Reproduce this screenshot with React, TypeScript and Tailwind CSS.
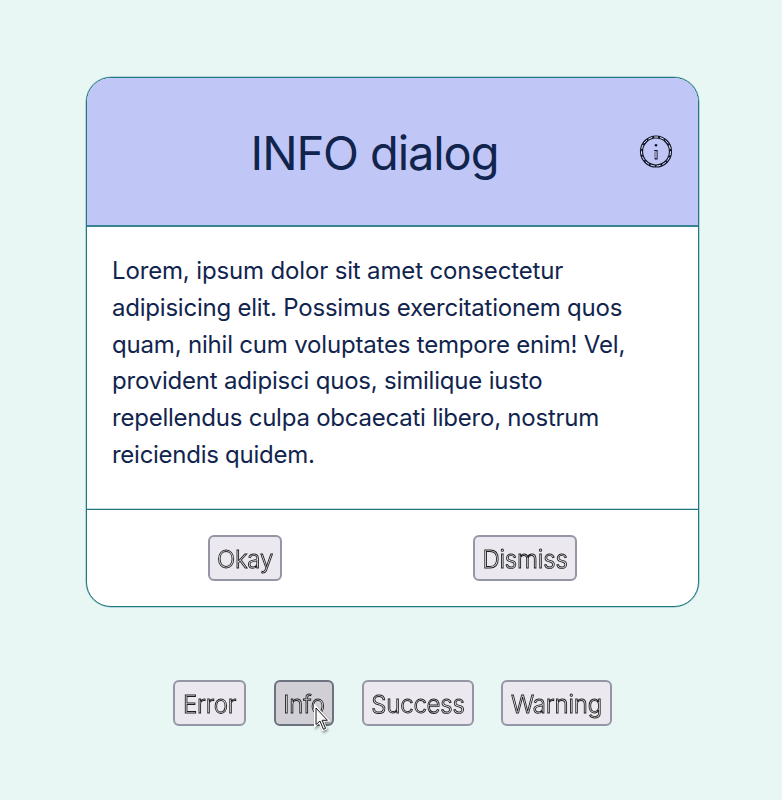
import React from "react";

const lines: [string, string][] = [
  ["Lorem, ipsum dolor sit amet consectetur", "tracking-[-0.15px]"],
  ["adipisicing elit. Possimus exercitationem quos", "tracking-[-0.22px]"],
  ["quam, nihil cum voluptates tempore enim! Vel,", "tracking-[-0.19px]"],
  ["provident adipisci quos, similique iusto", "tracking-[-0.2px]"],
  ["repellendus culpa obcaecati libero, nostrum", "tracking-[-0.23px]"],
  ["reiciendis quidem.", "tracking-[-0.27px]"],
];

function OutlinedButton({ label, size, active = false }: { label: string; size: string; active?: boolean }) {
  const tone = active ? "bg-[#d0cfd6] border-[#6d727f]" : "bg-[#ebe9ef] border-[#9496a5]";
  return (
    <button
      className={`flex h-[46px] items-center justify-center rounded-[6px] border-2 pt-[3px] text-[24px] leading-none font-light tracking-[-0.2px] whitespace-nowrap text-[#f7f6fa] will-change-transform [-webkit-text-stroke:0.9px_#1c1c1c] ${tone} ${size}`}
    >
      {label}
    </button>
  );
}

function InfoIcon() {
  return (
    <svg width="34" height="34" viewBox="0 0 34 34" fill="none">
      <circle cx="17" cy="16.5" r="14.5" stroke="#10172c" strokeWidth="3.2" />
      <circle cx="17" cy="16.5" r="14.5" stroke="#f2f2ff" strokeWidth="1" strokeDasharray="4 2" />
      <circle cx="17" cy="10.2" r="1.3" fill="#10172c" />
      <path d="M15.2 15.5h2.8v8.5h-1.7v-7.5" stroke="#10172c" strokeWidth="1.2" />
      <path d="M16.9 16.5v6.5" stroke="#f2f2ff" strokeWidth="0.9" />
    </svg>
  );
}

export default function App() {
  return (
    <div className="relative h-[800px] w-[782px] overflow-hidden bg-[#e8f7f4] pt-[77px] font-['Inter','Liberation_Sans',sans-serif] text-[#11244e]">
      <section className="ml-[86px] flex h-[530px] w-[613px] flex-col overflow-hidden rounded-[25px] border border-[#1f7882] bg-white shadow-[0_0_0_0.5px_#1f788280]">
        <header className="flex h-[149px] items-center border-b-2 border-[#388494] bg-[#c0c6f6] pr-[25px] pl-[23px]">
          <h1 className="flex-1 pt-[2px] text-center text-[47px] leading-none font-normal tracking-[-1.1px] whitespace-nowrap">INFO dialog</h1>
          <InfoIcon />
        </header>
        <div className="flex h-[282px] flex-col pt-[26px] pl-[25px] text-[24px] leading-[36.8px]">
          {lines.map(([text, tracking]) => (
            <p key={text} className={`whitespace-nowrap ${tracking}`}>{text}</p>
          ))}
        </div>
        <footer className="flex flex-1 items-start border-t border-[#1f7882] pt-[25px] pl-[121px] shadow-[0_-0.5px_0_#1f788280]">
          <OutlinedButton label="Okay" size="w-[74px]" />
          <div className="w-[191px]" />
          <OutlinedButton label="Dismiss" size="w-[104px]" />
        </footer>
      </section>
      <nav className="mt-[73px] ml-[173px] flex">
        <OutlinedButton label="Error" size="w-[73px] mr-[28px]" />
        <OutlinedButton label="Info" size="w-[60px] mr-[28px]" active />
        <OutlinedButton label="Success" size="w-[112px] mr-[27px]" />
        <OutlinedButton label="Warning" size="w-[111px]" />
      </nav>
      <svg className="absolute top-[703px] left-[311px] drop-shadow-[1px_2px_1px_rgba(0,0,0,0.35)]" width="22" height="32" viewBox="0 0 22 32">
        <path d="M3 0.5v24.5l5-4.4 3.2 7.6 5.2-2.2-3.3-7.2 6.7-.3z" fill="#fff" />
        <path d="M5 5v16.5l4-3.4 3.4 8.2 2.2-.9-3.5-8.1h5.3z" fill="#f6f6f8" stroke="#161616" strokeWidth="1" />
      </svg>
    </div>
  );
}
